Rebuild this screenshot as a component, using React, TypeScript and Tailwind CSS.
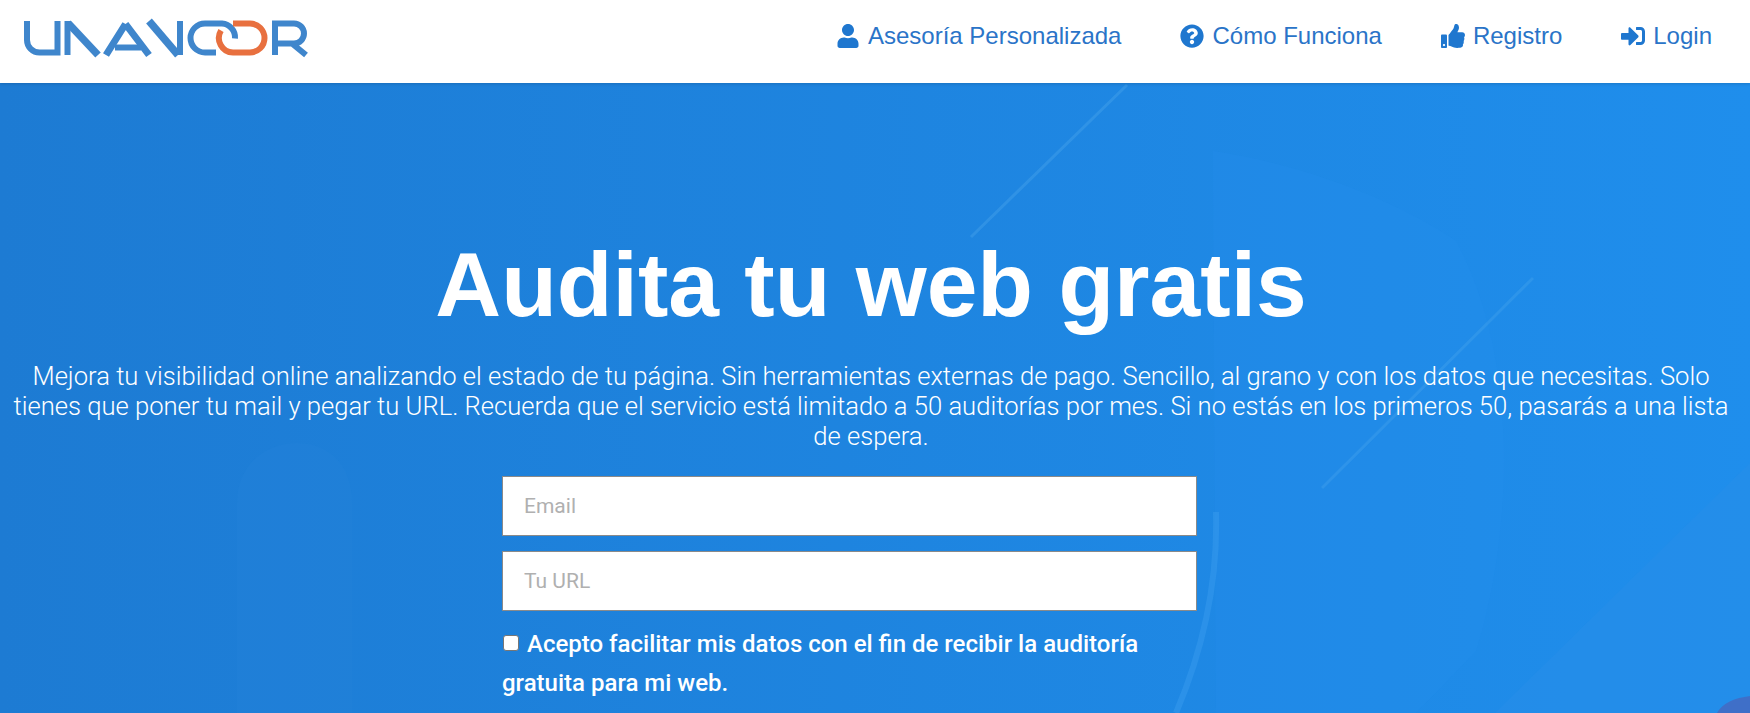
import { FaQuestionCircle, FaSignInAlt, FaThumbsUp, FaUser } from 'react-icons/fa'

const links = [
  { label: 'Asesoría Personalizada', icon: FaUser },
  { label: 'Cómo Funciona', icon: FaQuestionCircle },
  { label: 'Registro', icon: FaThumbsUp },
  { label: 'Login', icon: FaSignInAlt },
]

function Logo() {
  return (
    <svg width="290" height="40" viewBox="22 18 290 40" fill="none" strokeWidth="6" className="block">
      <g stroke="#3f86cc">
        <path d="M27 21v19a12.500 12.500 0 0 0 12.500 12.500H57.500V21" />
        <path d="M67.500 55V21" />
        <path d="M68 23 98 55" strokeWidth="7.500" />
        <path d="M106 55 125.500 24M125.500 24 149 55" strokeWidth="7" />
        <path d="M115 47.500h26" />
        <path d="M149 21 178 55" strokeWidth="7.500" />
        <path d="M180 21V55" />
        <path d="M216 52.500H205a14.500 14.500 0 0 1 0-29H222a14 14 0 0 1 13 15" />
        <path d="M275 55V23.500H294a10 10 0 0 1 0 20H278M292 43.500 306 55" />
      </g>
      <path d="M233 23.500H250a14.500 14.500 0 0 1 0 29H233a14.500 14.500 0 0 1-12-22" stroke="#e8703f" />
    </svg>
  )
}

function Backdrop() {
  return (
    <svg className="absolute inset-0 h-full w-full" viewBox="0 0 1750 630" preserveAspectRatio="none" fill="none">
      <path d="M1213 68c100 15 190 54 243 90 60 110 60 280 20 410l-60 62h-200z" fill="#2a93ee" fillOpacity="0.2" />
      <path d="M237 630V420c0-40 30-60 60-60s55 20 55 60v210z" fill="#2a86dc" fillOpacity="0.2" />
      <path d="M971 154 1127 2" stroke="#59aef0" strokeOpacity="0.3" strokeWidth="3" />
      <path d="M1322 405 1533 195" stroke="#59aef0" strokeOpacity="0.25" strokeWidth="3" />
      <path d="M1216 429c2 70-14 140-40 201" stroke="#3fa0ef" strokeOpacity="0.4" strokeWidth="6" />
      <path d="M1495 630 1750 380v250z" fill="#2a8ee8" fillOpacity="0.4" />
      <path d="M1717 630c5-10 18-15 33-17v17z" fill="#3f6fc8" />
    </svg>
  )
}

export default function App() {
  return (
    <div className="h-[713px] overflow-hidden bg-white font-['Roboto',sans-serif]">
      <header className="relative z-10 flex h-[83px] items-center justify-between pr-[38px] pb-[7px] pl-[22px] shadow-[0_1px_3px_rgba(0,0,0,0.15)]">
        <Logo />
        <nav className="mb-[5px] flex items-center gap-[59px] font-['Liberation_Sans',sans-serif] text-2xl text-[#2a74c8]">
          {links.map(({ label, icon: Icon }) => (
            <a key={label} className="flex items-center gap-2">
              <Icon className="text-2xl text-[#1f77cf]" />
              {label}
            </a>
          ))}
        </nav>
      </header>

      <main className="relative h-[630px] bg-gradient-to-r from-[#1d7bd3] to-[#1f8eec]">
        <Backdrop />
        <div className="relative flex flex-col items-center pt-[158px] pr-[8px]">
          <h1 className="font-['Liberation_Sans',sans-serif] text-[91.2px] leading-[86px] font-bold text-white">
            Audita tu web gratis
          </h1>
          <p className="mt-[34px] w-[1722px] text-center text-[25.6px] leading-[30px] font-light text-white">
            Mejora tu visibilidad online analizando el estado de tu página. Sin herramientas externas de pago. Sencillo, al grano y con los datos que necesitas. Solo tienes que poner tu mail y pegar tu URL. Recuerda que el servicio está limitado a 50 auditorías por mes. Si no estás en los primeros 50, pasarás a una lista de espera.
          </p>
          <form className="mt-[25px] ml-[502px] flex w-[695px] flex-col self-start">
            <input
              placeholder="Email"
              className="h-[60px] border border-[#8a8a8a] bg-white px-[21px] text-[21px] placeholder:text-[#b0b0b0]"
            />
            <input
              placeholder="Tu URL"
              className="mt-[15px] h-[60px] border border-[#8a8a8a] bg-white px-[21px] text-[21px] placeholder:text-[#b0b0b0]"
            />
            <label className="mt-[14px] block text-2xl leading-[39px] font-medium text-white">
              <input
                type="checkbox"
                className="mr-[8px] ml-[1px] size-[16px] appearance-none rounded-[3px] border border-[#767676] bg-white align-[1px]"
              />
              Acepto facilitar mis datos con el fin de recibir la auditoría gratuita para mi web.
            </label>
          </form>
        </div>
      </main>
    </div>
  )
}
